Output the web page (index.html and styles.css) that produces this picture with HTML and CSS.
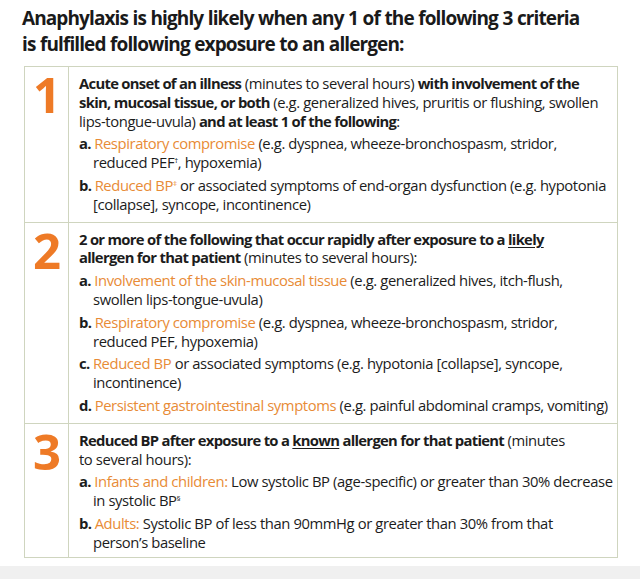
FILE: index.html
```html
<!DOCTYPE html>
<html>
<head>
<meta charset="utf-8">
<link rel="stylesheet" href="styles.css">
</head>
<body>
<div class="page">
  <h1 class="title">Anaphylaxis is highly likely when any 1 of the following 3 criteria<br>is fulfilled following exposure to an allergen:</h1>
  <div class="box">
    <div class="section">
      <div class="num">1</div>
      <div class="content">
        <p class="intro"><b>Acute onset of an illness</b> (minutes to several hours) <b>with involvement of the</b><br><b>skin, mucosal tissue, or both</b> (e.g. generalized hives, pruritis or flushing, swollen<br>lips-tongue-uvula) <b>and at least 1 of the following</b>:</p>
        <p class="item"><b class="lbl">a.</b> <span class="hl">Respiratory compromise</span> (e.g. dyspnea, wheeze-bronchospasm, stridor,<br>reduced PEF<sup>†</sup>, hypoxemia)</p>
        <p class="item"><b class="lbl">b.</b> <span class="hl">Reduced BP<sup>‡</sup></span> or associated symptoms of end-organ dysfunction (e.g. hypotonia<br>[collapse], syncope, incontinence)</p>
      </div>
    </div>
    <div class="section">
      <div class="num">2</div>
      <div class="content">
        <p class="intro"><b>2 or more of the following that occur rapidly after exposure to a <u>likely</u></b><br><b>allergen for that patient</b> (minutes to several hours):</p>
        <p class="item"><b class="lbl">a.</b> <span class="hl">Involvement of the skin-mucosal tissue</span> (e.g. generalized hives, itch-flush,<br>swollen lips-tongue-uvula)</p>
        <p class="item"><b class="lbl">b.</b> <span class="hl">Respiratory compromise</span> (e.g. dyspnea, wheeze-bronchospasm, stridor,<br>reduced PEF, hypoxemia)</p>
        <p class="item"><b class="lbl">c.</b> <span class="hl">Reduced BP</span> or associated symptoms (e.g. hypotonia [collapse], syncope,<br>incontinence)</p>
        <p class="item"><b class="lbl">d.</b> <span class="hl">Persistent gastrointestinal symptoms</span> (e.g. painful abdominal cramps, vomiting)</p>
      </div>
    </div>
    <div class="section last">
      <div class="num">3</div>
      <div class="content">
        <p class="intro"><b>Reduced BP after exposure to a <u>known</u> allergen for that patient</b> (minutes<br>to several hours):</p>
        <p class="item"><b class="lbl">a.</b> <span class="hl">Infants and children:</span> Low systolic BP (age-specific) or greater than 30% decrease<br>in systolic BP<sup>§</sup></p>
        <p class="item"><b class="lbl">b.</b> <span class="hl">Adults:</span> Systolic BP of less than 90mmHg or greater than 30% from that<br>person’s baseline</p>
      </div>
    </div>
  </div>
</div>
<div class="footer"></div>
</body>
</html>
```
FILE: styles.css
```css
html, body {
  margin: 0;
  padding: 0;
  background: #ffffff;
}
body {
  font-family: "Open Sans", "Liberation Sans", sans-serif;
  color: #1c1c1c;
  width: 640px;
  height: 579px;
  overflow: hidden;
  display: flex;
  flex-direction: column;
}
.page {
  flex: 1;
  padding: 5px 21px 0 24px;
}
.title {
  margin: 0 0 9px -2px;
  font-size: 19px;
  line-height: 26px;
  font-weight: 700;
  letter-spacing: -0.9px;
  word-spacing: 0.5px;
  color: #1a1a1a;
}
.box {
  width: 594px;
  border: 1px solid #cfd5bf;
  box-sizing: border-box;
}
.section {
  display: grid;
  grid-template-columns: 44px 1fr;
  border-bottom: 1px solid #cfd5bf;
}
.section.last {
  border-bottom: none;
}
.section.last .content {
  padding-bottom: 5px;
}
.num {
  border-right: 1px solid #cfd5bf;
  color: #ee7a26;
  font-weight: 700;
  font-size: 49px;
  line-height: 44px;
  text-align: center;
  padding-top: 5px;
  letter-spacing: -1px;
}
.content {
  padding: 7px 0 8px 10px;
  font-size: 14.8px;
  line-height: 18.8px;
  letter-spacing: -0.4px;
}
.content p {
  margin: 0;
}
.content b {
  font-weight: 700;
  letter-spacing: -0.7px;
}
.content .item {
  margin-top: 4px;
  padding-left: 14px;
  text-indent: -14px;
}
.hl {
  color: #e88b36;
}
sup {
  font-size: 8px;
  line-height: 0;
  vertical-align: 5px;
}
u {
  text-decoration-thickness: 1px;
  text-underline-offset: 2px;
}
.footer {
  height: 13px;
  background: #f0f0f0;
}
```
